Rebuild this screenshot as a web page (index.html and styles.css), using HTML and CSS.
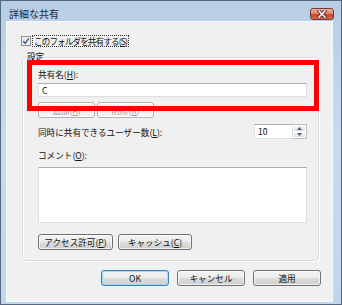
FILE: index.html
```html
<!DOCTYPE html>
<html lang="ja">
<head>
    <meta charset="UTF-8">
    <title>詳細な共有</title>
    <link rel="stylesheet" href="styles.css">
</head>
<body>
    <div class="window">
        <div class="titlebar">
            <span class="title">詳細な共有</span>
            <span class="close-btn">
                <svg width="10" height="8" viewBox="0 0 10 8">
                    <path d="M2 1 L8 7 M8 1 L2 7" stroke="#5b2018" stroke-width="3.2" stroke-linecap="square"/>
                    <path d="M2 1 L8 7 M8 1 L2 7" stroke="#fff" stroke-width="1.6" stroke-linecap="square"/>
                </svg>
            </span>
        </div>

        <div class="client">
            <div class="share-check">
                <span class="checkbox">
                    <svg width="8" height="8" viewBox="0 0 8 8">
                        <path d="M1.2 4.2 L3.2 6.3 L6.8 1.3" fill="none" stroke="#3b5a9a" stroke-width="1.4"/>
                    </svg>
                </span>
                <span class="focus-text">このフォルダを共有する(<u>S</u>)</span>
            </div>

            <div class="group">
                <div class="group-title">設定</div>

                <div class="field-label first">共有名(<u>H</u>):</div>
                <div class="textbox">C</div>

                <div class="btn-row">
                    <button class="btn small" disabled>追加(<u>A</u>)</button>
                    <button class="btn small" disabled>削除(<u>R</u>)</button>
                </div>

                <div class="limit-row">
                    <span>同時に共有できるユーザー数(<u>L</u>):</span>
                    <div class="spinner">
                        <span class="spin-value">10</span>
                        <span class="spin-btns">
                            <span class="spin-btn">
                                <svg width="5" height="3" viewBox="0 0 5 3"><path d="M0 3 L2.5 0 L5 3 Z" fill="#4a5f87"/></svg>
                            </span>
                            <span class="spin-btn">
                                <svg width="5" height="3" viewBox="0 0 5 3"><path d="M0 0 L2.5 3 L5 0 Z" fill="#4a5f87"/></svg>
                            </span>
                        </span>
                    </div>
                </div>

                <div class="field-label comment">コメント(<u>O</u>):</div>
                <div class="textarea"></div>

                <div class="btn-row access">
                    <button class="btn perm">アクセス許可(<u>P</u>)</button>
                    <button class="btn cache">キャッシュ(<u>C</u>)</button>
                </div>
            </div>

            <div class="dialog-buttons">
                <button class="btn dialog default">OK</button>
                <button class="btn dialog">キャンセル</button>
                <button class="btn dialog">適用</button>
            </div>

            <div class="highlight"></div>
        </div>
    </div>
</body>
</html>
```

FILE: styles.css
```css
* {
    box-sizing: border-box;
}
body {
    margin: 0;
    width: 342px;
    height: 305px;
    overflow: hidden;
    font-family: "Noto Sans CJK JP", "Noto Sans", sans-serif;
    font-size: 8.6px;
    color: #111;
    background: #fff;
}
.window {
    width: 342px;
    height: 305px;
    border: 1px solid #55687e;
    background: linear-gradient(180deg, #b7cee7 0%, #c8daee 45%, #c2d6eb 100%);
    display: flex;
    flex-direction: column;
}
.titlebar {
    height: 20px;
    flex-shrink: 0;
    display: flex;
    align-items: flex-start;
    justify-content: space-between;
}
.title {
    margin: 7px 0 0 8px;
    font-size: 10px;
    line-height: 12px;
    color: #1b2838;
}
.close-btn {
    margin: 7px 7px 0 0;
    width: 24px;
    height: 12px;
    border: 1px solid #7a3a32;
    border-radius: 3px;
    background: linear-gradient(180deg, #eeb1a2 0%, #de7f6b 48%, #cb3f27 52%, #dc6a50 100%);
    display: flex;
    align-items: center;
    justify-content: center;
}
.client {
    position: relative;
    margin: 0 8px 2px 5px;
    height: 281px;
    border: 1px solid #f7fafd;
    background: #f0f0f0;
}
.share-check {
    margin: 13px 0 0 14px;
    height: 12px;
    display: flex;
    align-items: center;
}
.checkbox {
    width: 10px;
    height: 10px;
    border: 1px solid #8f8f8f;
    background: linear-gradient(135deg, #dcdcdc 0%, #fbfbfb 100%);
    box-shadow: inset 0 0 0 1px #f4f4f4;
    display: flex;
    align-items: center;
    justify-content: center;
}
.focus-text {
    margin-left: 1px;
    padding: 0 1px;
    line-height: 10px;
    letter-spacing: -0.9px;
    border: 1px dotted #333;
}
.group {
    margin: 10px 13px 0 15px;
    padding: 0 11px 10px 15px;
    border: 1px solid #d5dfe5;
    border-radius: 3px;
    box-shadow: inset 1px 1px 0 #fff, 1px 1px 0 #fff;
}
.group-title {
    width: fit-content;
    margin: -7px 0 0 -12px;
    padding: 0 1px;
    height: 11px;
    line-height: 11px;
    background: #f0f0f0;
}
.field-label {
    height: 11px;
    line-height: 11px;
}
.field-label.first {
    margin-top: 7px;
}
.field-label.comment {
    margin-top: 11px;
}
.textbox {
    margin-top: 3px;
    height: 14px;
    padding-left: 3px;
    line-height: 12px;
    background: #fff;
    border: 1px solid #dbdfe6;
    border-top-color: #abadb3;
}
.textarea {
    margin-top: 6px;
    height: 56px;
    background: #fff;
    border: 1px solid #dbdfe6;
    border-top-color: #abadb3;
}
.btn-row {
    margin-top: 5px;
    display: flex;
    gap: 2px;
}
.btn-row.access {
    margin-top: 11px;
    gap: 5px;
}
.btn {
    height: 16px;
    padding: 0;
    font: inherit;
    line-height: 14px;
    color: #111;
    border: 1px solid #707070;
    border-radius: 3px;
    background: linear-gradient(180deg, #f3f3f3 0%, #ebebeb 50%, #dddddd 51%, #cfcfcf 100%);
    box-shadow: inset 0 0 0 1px rgba(255, 255, 255, 0.7);
}
.btn:disabled {
    color: #9a9a9a;
    border-color: #adb2b5;
    background: #f4f4f4;
    text-shadow: 1px 1px 0 #fff;
}
.btn.small {
    width: 57px;
}
.btn.perm {
    width: 75px;
}
.btn.cache {
    width: 74px;
}
.limit-row {
    margin-top: 6px;
    height: 15px;
    display: flex;
    align-items: center;
    justify-content: space-between;
}
.spinner {
    width: 53px;
    height: 15px;
    display: flex;
}
.spin-value {
    flex: 1;
    padding-left: 3px;
    line-height: 13px;
    background: #fff;
    border: 1px solid #dbdfe6;
    border-top-color: #abadb3;
}
.spin-btns {
    width: 14px;
    display: flex;
    flex-direction: column;
    border: 1px solid #b9bdc3;
    border-left: none;
}
.spin-btn {
    flex: 1;
    display: flex;
    align-items: center;
    justify-content: center;
    background: linear-gradient(180deg, #f5f5f5, #dcdcdc);
    border: 1px solid #fff;
}
.dialog-buttons {
    margin-top: 9px;
    padding-right: 11px;
    display: flex;
    justify-content: flex-end;
    gap: 8px;
}
.btn.dialog {
    width: 68px;
}
.btn.default {
    border-color: #3c7fb1;
    box-shadow: inset 0 0 0 1px #9fdcf6;
}
.highlight {
    position: absolute;
    left: 20px;
    top: 38px;
    width: 292px;
    height: 51px;
    border: 5px solid #f00;
}
```
